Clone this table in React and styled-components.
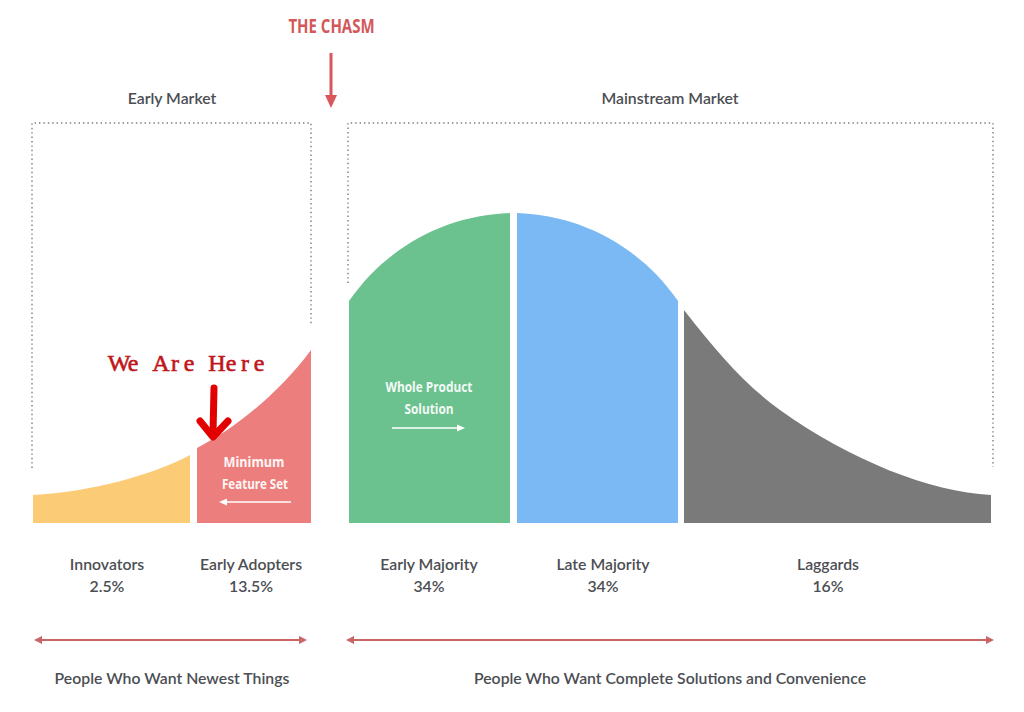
import React from 'react';
import styled, { createGlobalStyle } from 'styled-components';

const GlobalStyle = createGlobalStyle`
  html, body { margin: 0; padding: 0; background: #fff; }
  body { font-family: Lato, "Noto Sans", sans-serif; color: #4b4e53; }
`;

const Page = styled.div`
  width: 1024px;
  height: 712px;
  overflow: hidden;
  display: flex;
  flex-direction: column;
  background: #fff;
`;

const TitleRow = styled.div`
  display: grid;
  grid-template-columns: 271px 120px 1fr;
  padding-top: 14px;
  height: 24px;
`;

const ChasmTitle = styled.div`
  grid-column: 2;
  justify-self: center;
  font-family: "Open Sans", sans-serif;
  font-weight: 700;
  font-size: 20px;
  line-height: 24px;
  color: #d4585b;
  white-space: nowrap;
  transform: scaleX(0.75);
`;

const MarketRow = styled.div`
  display: grid;
  grid-template-columns: 32px 280px 38px 640px;
  height: 77px;
`;

const MarketTitle = styled.div`
  grid-column: ${(p) => p.$col};
  align-self: end;
  justify-self: center;
  margin-bottom: 7px;
  font-size: 15.8px;
  line-height: 20px;
  font-weight: 600;
  white-space: nowrap;
`;

const ChasmArrow = styled.svg`
  grid-column: 3;
  justify-self: center;
  margin-top: 15px;
  display: block;
`;

const Chart = styled.svg`
  display: block;
  flex: none;
`;

const LabelGrid = styled.div`
  display: grid;
  grid-template-columns: 37px 140px 4px 140px 38px 140px 34px 140px 85px 140px;
  margin-top: 23px;
`;

const Group = styled.div`
  grid-column: ${(p) => p.$col};
  text-align: center;
  font-size: 15.8px;
  line-height: 22px;
  font-weight: 600;
  white-space: nowrap;
`;

const ArrowRow = styled.div`
  display: grid;
  grid-template-columns: 34px 273px 39px 648px;
  margin-top: 38px;
  height: 10px;
`;

const ArrowSvg = styled.svg`
  grid-column: ${(p) => p.$col};
  display: block;
`;

const CaptionRow = styled.div`
  display: grid;
  grid-template-columns: 32px 280px 38px 640px;
  margin-top: 22px;
`;

const Caption = styled.div`
  grid-column: ${(p) => p.$col};
  justify-self: center;
  font-size: 15.8px;
  line-height: 22px;
  font-weight: 600;
  white-space: nowrap;
`;

const segments = [
  { fill: '#fbcb76', d: 'M33 523 L33 495 C 90 492, 150 476, 190 455 L190 523 Z' },
  { fill: '#ec7f7e', d: 'M197 523 L197 448 C 236 428, 280 392, 311 350 L311 523 Z' },
  { fill: '#6bc28f', d: 'M349 523 L349 301 C 388 245, 448 215, 510 213 L510 523 Z' },
  { fill: '#7ab9f4', d: 'M517 523 L517 213 C 579 215, 639 245, 678 301 L678 523 Z' },
  { fill: '#7a7a7a', d: 'M684 523 L684 310 C 715 350, 745 385, 780 410 C 850 460, 930 492, 991 495 L991 523 Z' },
];

const groups = [
  { col: 2, name: 'Innovators', pct: '2.5%' },
  { col: 4, name: 'Early Adopters', pct: '13.5%' },
  { col: 6, name: 'Early Majority', pct: '34%' },
  { col: 8, name: 'Late Majority', pct: '34%' },
  { col: 10, name: 'Laggards', pct: '16%' },
];

function Arrow({ col, width }) {
  const c = '#c96565';
  return (
    <ArrowSvg $col={col} width={width} height="10" viewBox={`0 0 ${width} 10`}>
      <line x1="6" y1="5" x2={width - 6} y2="5" stroke={c} strokeWidth="2" />
      <polygon points="0,5 8,1 8,9" fill={c} />
      <polygon points={`${width},5 ${width - 8},1 ${width - 8},9`} fill={c} />
    </ArrowSvg>
  );
}

const inner = {
  fontFamily: '"Open Sans", sans-serif',
  fontWeight: 700,
  fontSize: 14.5,
};

// typewriter style note: every letter sits in a 14px cell
const note = 'We Are Here';
const noteX = note.split('').map((_, i) => 112 + 7 + i * 14).join(' ');

function ChartDrawing() {
  const dots = { stroke: '#7b7b7b', strokeWidth: 1.4, strokeDasharray: '1.4 3', fill: 'none' };
  return (
    <Chart width="1024" height="415" viewBox="0 115 1024 415">
      <path d="M32 468 L32 123 L311 123 L311 325" {...dots} />
      <path d="M348 283 L348 123 L993 123 L993 467" {...dots} />

      {segments.map((s, i) => (
        <path key={i} d={s.d} fill={s.fill} />
      ))}

      <text x={noteX} y="371" textAnchor="middle" fontFamily='"Liberation Serif", serif' fontSize="24"
        fill="#c0161a" stroke="#c0161a" strokeWidth="0.6">
        {note}
      </text>
      <g stroke="#e30000" strokeWidth="7" strokeLinecap="round" strokeLinejoin="round" fill="none">
        <path d="M214 388 L213 434" />
        <path d="M200 421 L213 437 L228 421" />
      </g>

      <g fill="#fff" opacity="0.93" style={inner} textAnchor="middle">
        <text x="254" y="467" textLength="61" lengthAdjust="spacingAndGlyphs">Minimum</text>
        <text x="255" y="489" textLength="66" lengthAdjust="spacingAndGlyphs">Feature Set</text>
        <text x="429" y="392" textLength="87" lengthAdjust="spacingAndGlyphs">Whole Product</text>
        <text x="429" y="414" textLength="49" lengthAdjust="spacingAndGlyphs">Solution</text>
      </g>
      <g fill="#fff" stroke="#fff" strokeWidth="1.6">
        <line x1="226" y1="502" x2="291" y2="502" />
        <polygon points="219,502 227,498.5 227,505.5" stroke="none" />
        <line x1="392" y1="428" x2="458" y2="428" />
        <polygon points="465,428 457,424.5 457,431.5" stroke="none" />
      </g>
    </Chart>
  );
}

export default function App() {
  return (
    <Page>
      <GlobalStyle />
      <TitleRow>
        <ChasmTitle>THE CHASM</ChasmTitle>
      </TitleRow>
      <MarketRow>
        <MarketTitle $col={2}>Early Market</MarketTitle>
        <ChasmArrow width="14" height="55" viewBox="0 0 14 55">
          <rect x="5.5" y="0" width="3" height="44" fill="#d9575b" />
          <polygon points="1,42 13,42 7,55" fill="#d9575b" />
        </ChasmArrow>
        <MarketTitle $col={4}>Mainstream Market</MarketTitle>
      </MarketRow>

      <ChartDrawing />

      <LabelGrid>
        {groups.map((g) => (
          <Group key={g.name} $col={g.col}>
            <div>{g.name}</div>
            <div>{g.pct}</div>
          </Group>
        ))}
      </LabelGrid>

      <ArrowRow>
        <Arrow col={2} width={273} />
        <Arrow col={4} width={648} />
      </ArrowRow>

      <CaptionRow>
        <Caption $col={2}>People Who Want Newest Things</Caption>
        <Caption $col={4}>People Who Want Complete Solutions and Convenience</Caption>
      </CaptionRow>
    </Page>
  );
}
